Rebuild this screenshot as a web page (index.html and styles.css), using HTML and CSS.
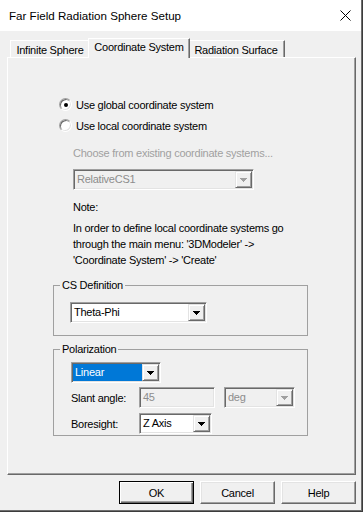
FILE: index.html
```html
<!DOCTYPE html>
<html lang="en">
<head>
    <meta charset="UTF-8">
    <title>Far Field Radiation Sphere Setup</title>
    <link rel="stylesheet" href="styles.css">
</head>
<body>
    <div class="window">
        <!-- Barra de titulo -->
        <div class="titlebar">
            <span class="title">Far Field Radiation Sphere Setup</span>
            <svg class="close" width="11" height="11" viewBox="0 0 11 11">
                <path d="M0.5 0.5 L10.5 10.5 M10.5 0.5 L0.5 10.5" stroke="#000" stroke-width="1" fill="none"/>
            </svg>
        </div>

        <div class="client">
            <!-- Pestanas -->
            <div class="tabs">
                <div class="tab tab-infinite">Infinite Sphere</div>
                <div class="tab tab-coord active">Coordinate System</div>
                <div class="tab tab-surface">Radiation Surface</div>
            </div>

            <div class="panel">
                <div class="radio-row"><span class="radio checked"></span>Use global coordinate system</div>
                <div class="radio-row"><span class="radio"></span>Use local coordinate system</div>

                <div class="local">
                    <div class="hint">Choose from existing coordinate systems...</div>
                    <div class="combo combo-cs disabled">
                        <span class="combo-text">RelativeCS1</span>
                        <span class="combo-btn"><svg width="7" height="4" viewBox="0 0 7 4"><path d="M0 0 H7 L3.5 4 Z"/></svg></span>
                    </div>
                    <div class="note">Note:</div>
                    <p class="note-text">In order to define local coordinate systems go<br>through the main menu: '3DModeler' -&gt;<br>'Coordinate System' -&gt; 'Create'</p>
                </div>

                <fieldset class="group group-cs">
                    <legend>CS Definition</legend>
                    <div class="group-body cs-body">
                        <div class="combo combo-def">
                            <span class="combo-text">Theta-Phi</span>
                            <span class="combo-btn"><svg width="7" height="4" viewBox="0 0 7 4"><path d="M0 0 H7 L3.5 4 Z"/></svg></span>
                        </div>
                    </div>
                </fieldset>

                <fieldset class="group group-pol">
                    <legend>Polarization</legend>
                    <div class="group-body pol-body">
                        <div class="combo combo-pol">
                            <span class="combo-text selected">Linear</span>
                            <span class="combo-btn"><svg width="7" height="4" viewBox="0 0 7 4"><path d="M0 0 H7 L3.5 4 Z"/></svg></span>
                        </div>
                        <div class="field-row slant-row">
                            <span class="field-label">Slant angle:</span>
                            <div class="edit disabled">45</div>
                            <div class="combo combo-unit disabled">
                                <span class="combo-text">deg</span>
                                <span class="combo-btn"><svg width="7" height="4" viewBox="0 0 7 4"><path d="M0 0 H7 L3.5 4 Z"/></svg></span>
                            </div>
                        </div>
                        <div class="field-row bore-row">
                            <span class="field-label">Boresight:</span>
                            <div class="combo combo-axis">
                                <span class="combo-text">Z Axis</span>
                                <span class="combo-btn"><svg width="7" height="4" viewBox="0 0 7 4"><path d="M0 0 H7 L3.5 4 Z"/></svg></span>
                            </div>
                        </div>
                    </div>
                </fieldset>
            </div>

            <!-- Botones -->
            <div class="buttons">
                <button class="btn default">OK</button>
                <button class="btn">Cancel</button>
                <button class="btn">Help</button>
            </div>
        </div>
    </div>
</body>
</html>
```

FILE: styles.css
```css
/* Estilos generales */
body {
    margin: 0;
    padding: 0;
    background-color: #3c3c3c;
    font-family: 'Liberation Sans', Arial, sans-serif;
    font-size: 11px;
    letter-spacing: -0.25px;
    color: #000;
}

.window {
    width: 361px;
    height: 510px;
    background-color: #f0f0f0;
    border-right: 1px solid #6e6e6e;
    border-bottom: 1px solid #6e6e6e;
}

/* Barra de titulo */
.titlebar {
    height: 31px;
    background-color: #fff;
    display: flex;
    align-items: center;
    justify-content: space-between;
    padding: 0 10px 0 9px;
}

.title {
    font-size: 11.6px;
    letter-spacing: 0;
    margin-top: 0;
}

.close {
    display: block;
    margin-top: 0;
}

.client {
    padding-top: 7px;
}

/* Pestanas */
.tabs {
    display: flex;
    align-items: flex-end;
    height: 19px;
    padding-left: 10px;
}

.tab {
    box-sizing: border-box;
    height: 17px;
    padding-top: 2px;
    line-height: 15px;
    text-align: center;
    border-top: 1px solid #fff;
    border-left: 1px solid #fff;
    border-right: 1px solid #696969;
    box-shadow: inset -1px 0 #a0a0a0;
    background-color: #f0f0f0;
}

.tab-infinite { width: 80px; }
.tab-coord { width: 98px; }
.tab-surface { width: 97px; }

.tab.active {
    width: 102px;
    height: 20px;
    margin: 0 -2px -1px;
    padding-top: 1px;
    z-index: 1;
}

.tab-surface {
    border-left: none;
}

/* Panel */
.panel {
    box-sizing: border-box;
    width: 349px;
    height: 418px;
    margin-left: 7px;
    padding: 36px 0 0 45px;
    border-top: 1px solid #fff;
    border-left: 1px solid #fff;
    border-right: 1px solid #696969;
    border-bottom: 1px solid #696969;
    box-shadow: inset -1px -1px #a0a0a0;
}

.radio-row {
    display: flex;
    align-items: center;
    height: 21px;
    margin-left: 6px;
}

.radio {
    box-sizing: border-box;
    width: 13px;
    height: 13px;
    margin-right: 4px;
    border-radius: 50%;
    border: 1px solid;
    border-color: #a0a0a0 #fff #fff #a0a0a0;
    box-shadow: inset 1px 1px #696969, inset -1px -1px #e3e3e3;
    background-color: #fff;
    display: flex;
    align-items: center;
    justify-content: center;
}

.radio.checked::after {
    content: '';
    width: 4px;
    height: 4px;
    border-radius: 50%;
    background-color: #000;
}

.local {
    margin-left: 20px;
}

.hint {
    margin-top: 9px;
    line-height: 16px;
    color: #a0a0a0;
}

.note {
    margin-top: 9px;
    line-height: 16px;
}

.note-text {
    margin: 5px 0 0;
    line-height: 16px;
    white-space: nowrap;
}

/* Combos */
.combo {
    box-sizing: border-box;
    height: 21px;
    display: flex;
    border: 1px solid;
    border-color: #a0a0a0 #fff #fff #a0a0a0;
    box-shadow: inset 1px 1px #696969, inset -1px -1px #e3e3e3;
    background-color: #fff;
    padding: 1px;
}

.combo-cs { width: 181px; margin-top: 8px; }
.combo-def { width: 137px; }
.combo-pol { width: 90px; }
.combo-unit { width: 71px; }
.combo-axis { width: 73px; }

.combo-text {
    flex: 1;
    line-height: 17px;
    padding-left: 2px;
}

.combo-text.selected {
    background-color: #0078d7;
    color: #fff;
}

.combo-btn {
    box-sizing: border-box;
    width: 17px;
    height: 17px;
    background-color: #f0f0f0;
    border: 1px solid;
    border-color: #e3e3e3 #696969 #696969 #e3e3e3;
    box-shadow: inset 1px 1px #fff, inset -1px -1px #a0a0a0;
    display: flex;
    align-items: center;
    justify-content: center;
}

.combo-btn svg {
    fill: #000;
    shape-rendering: crispEdges;
}

.combo.disabled {
    background-color: #f0f0f0;
    color: #8d8d8d;
}

.combo.disabled .combo-btn svg {
    fill: #a0a0a0;
}

.edit {
    box-sizing: border-box;
    width: 76px;
    height: 21px;
    line-height: 17px;
    padding: 1px 3px;
    border: 1px solid;
    border-color: #a0a0a0 #fff #fff #a0a0a0;
    box-shadow: inset 1px 1px #696969, inset -1px -1px #e3e3e3;
}

.edit.disabled {
    background-color: #f0f0f0;
    color: #8d8d8d;
}

/* Grupos */
.group {
    box-sizing: border-box;
    width: 255px;
    margin: 0;
    padding: 0;
    border: 1px solid #a0a0a0;
    min-inline-size: 0;
}

.group legend {
    margin-left: 6px;
    padding: 0 2px;
    line-height: 14px;
}

.group-cs {
    margin-top: 10px;
}

.group-pol {
    margin-top: 6px;
}

.cs-body {
    padding: 10px 0 12px 16px;
}

.pol-body {
    padding: 6px 0 1px 17px;
}

.field-row {
    display: flex;
    align-items: center;
}

.slant-row {
    margin-top: 4px;
}

.bore-row {
    margin-top: 5px;
}

.field-label {
    width: 68px;
}

.combo-unit {
    margin-left: 9px;
}

/* Botones */
.buttons {
    display: flex;
    justify-content: flex-end;
    gap: 6px;
    width: 356px;
    margin-top: 6px;
}

.btn {
    box-sizing: border-box;
    width: 75px;
    height: 23px;
    padding: 0;
    font-family: inherit;
    font-size: 11px;
    letter-spacing: -0.25px;
    color: #000;
    background-color: #f0f0f0;
    border: 1px solid;
    border-color: #fff #696969 #696969 #fff;
    box-shadow: inset -1px -1px #a0a0a0, inset 1px 1px #e3e3e3;
}

.btn.default {
    border-color: #000;
    box-shadow: inset 1px 1px #fff, inset -1px -1px #696969, inset -2px -2px #a0a0a0;
}
```
